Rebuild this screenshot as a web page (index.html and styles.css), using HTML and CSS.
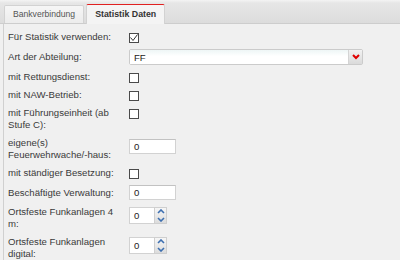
FILE: index.html
```html
<!DOCTYPE html>
<html lang="de">
<head>
    <meta charset="UTF-8">
    <title>Statistik Daten</title>
    <link rel="stylesheet" href="styles.css">
</head>
<body>
    <div class="panel">
        <div class="tab-strip">
            <div class="tab">Bankverbindung</div>
            <div class="tab active">Statistik Daten</div>
        </div>
        <div class="tab-body">
            <form class="form-grid">
                <label class="field-label">Für Statistik verwenden:</label>
                <div class="field">
                    <span class="check">
                        <svg width="8" height="8" viewBox="0 0 8 8"><polyline points="0.5,3.5 3,6.5 7.5,0.5" fill="none" stroke="#333" stroke-width="1"/></svg>
                    </span>
                </div>

                <label class="field-label pad">Art der Abteilung:</label>
                <div class="field">
                    <div class="combo">
                        <span class="combo-text">FF</span>
                        <span class="combo-trigger">
                            <svg width="8" height="6" viewBox="0 0 8 6"><polyline points="1,1 4,4 7,1" fill="none" stroke="#e00000" stroke-width="2"/></svg>
                        </span>
                    </div>
                </div>

                <label class="field-label">mit Rettungsdienst:</label>
                <div class="field"><span class="check"></span></div>

                <label class="field-label">mit NAW-Betrieb:</label>
                <div class="field"><span class="check"></span></div>

                <label class="field-label">mit Führungseinheit (ab Stufe C):</label>
                <div class="field"><span class="check"></span></div>

                <label class="field-label">eigene(s) Feuerwehrwache/-haus:</label>
                <div class="field"><div class="text-input">0</div></div>

                <label class="field-label">mit ständiger Besetzung:</label>
                <div class="field"><span class="check"></span></div>

                <label class="field-label pad">Beschäftigte Verwaltung:</label>
                <div class="field"><div class="text-input flush">0</div></div>

                <label class="field-label">Ortsfeste Funkanlagen 4 m:</label>
                <div class="field">
                    <div class="spinner">
                        <div class="spin-input">0</div>
                        <div class="spin-buttons">
                            <span><svg width="8" height="5" viewBox="0 0 8 5"><polyline points="1,4 4,1 7,4" fill="none" stroke="#3d6fb0" stroke-width="1.6"/></svg></span>
                            <span><svg width="8" height="5" viewBox="0 0 8 5"><polyline points="1,1 4,4 7,1" fill="none" stroke="#3d6fb0" stroke-width="1.6"/></svg></span>
                        </div>
                    </div>
                </div>

                <label class="field-label">Ortsfeste Funkanlagen digital:</label>
                <div class="field">
                    <div class="spinner">
                        <div class="spin-input">0</div>
                        <div class="spin-buttons">
                            <span><svg width="8" height="5" viewBox="0 0 8 5"><polyline points="1,4 4,1 7,4" fill="none" stroke="#3d6fb0" stroke-width="1.6"/></svg></span>
                            <span><svg width="8" height="5" viewBox="0 0 8 5"><polyline points="1,1 4,4 7,1" fill="none" stroke="#3d6fb0" stroke-width="1.6"/></svg></span>
                        </div>
                    </div>
                </div>
            </form>
        </div>
    </div>
</body>
</html>
```

FILE: styles.css
```css
body {
    margin: 0;
    font-family: "Liberation Sans", Arial, sans-serif;
    font-size: 9.6px;
    color: #3a3a3a;
    background-color: #f0f0f0;
}

.panel {
    width: 400px;
    height: 260px;
    overflow: hidden;
    background-color: #f0f0f0;
}

.tab-strip {
    display: flex;
    align-items: flex-end;
    gap: 2px;
    height: 24px;
    padding-left: 4px;
    background: linear-gradient(#f4f4f4 0, #e6e6e6 3px, #dcdcdc 100%);
    border-bottom: 1px solid #cdcdcd;
    box-sizing: border-box;
}

.tab {
    height: 18px;
    line-height: 17px;
    padding: 0 8px;
    font-size: 8.6px;
    border: 1px solid #d2d2d2;
    border-bottom: none;
    border-radius: 2px 2px 0 0;
    background: linear-gradient(#f6f6f6, #ececec);
    color: #555;
    box-sizing: border-box;
}

.tab.active {
    height: 20px;
    line-height: 18px;
    padding: 0 8px;
    margin-bottom: -1px;
    font-size: 8.8px;
    border-top: 1px solid #e02020;
    background: #f4f4f4;
    color: #333;
    font-weight: bold;
}

.tab-body {
    height: 236px;
    border-left: 1px solid #d0d0d0;
    margin-left: 3px;
    padding: 7px 0 0 4px;
}

.form-grid {
    display: grid;
    grid-template-columns: 121px 234px;
    row-gap: 6px;
    margin: 0;
}

.field-label {
    line-height: 12px;
    padding-right: 4px;
}

.field-label.pad {
    padding-top: 2px;
}

.field {
    display: flex;
    align-items: flex-start;
}

.check {
    display: flex;
    align-items: center;
    justify-content: center;
    width: 10px;
    height: 10px;
    margin-top: 2px;
    border: 1px solid #4a4a4a;
    background: #fff;
    box-sizing: border-box;
}

.combo {
    display: flex;
    width: 234px;
    height: 16px;
    border: 1px solid #cbcbcb;
    border-radius: 2px;
    background: #fff;
    box-sizing: border-box;
}

.combo-text {
    flex: 1;
    padding-left: 4px;
    line-height: 15px;
    color: #222;
    background: linear-gradient(#eef6f6, #ffffff 45%);
}

.combo-trigger {
    display: flex;
    align-items: center;
    justify-content: center;
    width: 13px;
    background: linear-gradient(#f2f2f2, #dadada);
    border-left: 1px solid #d4d4d4;
}

.text-input {
    width: 47px;
    height: 15px;
    margin-top: 2px;
    padding-left: 4px;
    line-height: 14px;
    color: #222;
    border: 1px solid #d2d2d2;
    border-top-color: #c2c2c2;
    background: #fff;
    box-sizing: border-box;
}

.text-input.flush {
    margin-top: 0;
}

.spinner {
    display: flex;
    height: 17px;
    margin-top: 1px;
}

.spin-input {
    width: 25px;
    padding-left: 4px;
    line-height: 16px;
    color: #222;
    border: 1px solid #d2d2d2;
    border-right: none;
    background: #fff;
    box-sizing: border-box;
}

.spin-buttons {
    display: flex;
    flex-direction: column;
    width: 13px;
    border: 1px solid #cfcfcf;
    background: linear-gradient(#f6f6f6, #dcdcdc);
    box-sizing: border-box;
}

.spin-buttons span {
    flex: 1;
    display: flex;
    align-items: center;
    justify-content: center;
}
```
